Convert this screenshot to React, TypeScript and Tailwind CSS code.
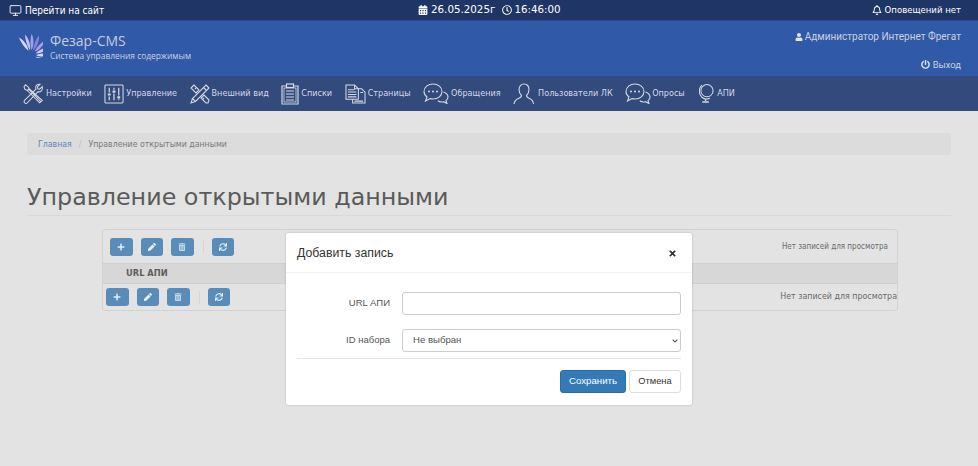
import {
  FaCalendarAlt,
  FaPen,
  FaPlus,
  FaPowerOff,
  FaRegBell,
  FaRegClock,
  FaSync,
  FaTimes,
  FaTrashAlt,
  FaUser,
  FaChevronDown,
} from "react-icons/fa";
import { Monitor } from "lucide-react";

const IconTools = () => (
  <svg width="21" height="22" viewBox="0 0 24 24" fill="none" stroke="currentColor" strokeWidth="1.2">
    <path d="M3 1.500l3.500 3v2L5 8 2 6.500l-.8-3zM6.500 6.500l14 14.500M5 8l14 14 3-2.500L7 6" />
    <path d="M22 3.500l-3 3-2-.5-.5-2 3-3c-2.500-.7-5 1-5 3.500 0 .8.200 1.300.4 1.800L2 19c-1.200 1.200-.8 2.500 0 3.200.8.700 2 1 3-.2L17.200 9.300c2.800 1 5.800-1.500 4.800-5.800z" />
  </svg>
);

const IconSliders = () => (
  <svg width="20" height="20" viewBox="0 0 21 21" fill="none" stroke="currentColor" strokeWidth="1.1">
    <rect x="1" y="1" width="19" height="19" rx="1" />
    <path d="M5.500 4v5M5.500 13v4M10.500 4v2M10.500 10v7M15.500 4v8M15.500 16v1" strokeWidth="1.300" />
    <path d="M4 11h3M9 8h3M14 14h3" strokeWidth="2.200" />
  </svg>
);

const IconDraw = () => (
  <svg width="20" height="20" viewBox="0 0 20 20" fill="none" stroke="currentColor" strokeWidth="1.1">
    <path d="M16 1l3 3L5.500 17.500 1 19l1.500-4.500z" />
    <path d="M13.500 3.500l3 3M2.500 14.500l3 3" />
    <path d="M4 1L1 4l5 5 3-3zM11 14l3-3 5 5-1 3-2 0zM5 5l1-1M13 15l1-1" />
  </svg>
);

const IconList = () => (
  <svg width="18" height="22" viewBox="0 0 18 22" fill="none" stroke="currentColor" strokeWidth="1.200">
    <path d="M5.500 3H1v18h16V3h-4.500" />
    <rect x="3" y="5" width="12" height="14" strokeWidth="0.800" />
    <rect x="5.500" y="1" width="7" height="3.500" />
    <path d="M5 8h8M5 11h8M5 14h8M5 17h8" />
  </svg>
);

const IconPages = () => (
  <svg width="21" height="20" viewBox="0 0 22 21" fill="none" stroke="currentColor" strokeWidth="1.100">
    <path d="M1 1h9l4 4v11H1z" />
    <path d="M10 1v4h4M3 6h7M3 8.500h9M3 11h9M3 13.500h9" />
    <path d="M14 5h3.500l3.500 3.500V20H8v-4" />
    <path d="M16 9h3M10 18h9" />
  </svg>
);

const IconChat = () => (
  <svg width="26" height="21" viewBox="0 0 26 21" fill="none" stroke="currentColor" strokeWidth="1.100">
    <path d="M10 1c5 0 9 3 9 7.500S15 16 10 16c-1 0-2-.1-3-.4L2.500 18 4 14C2 12.600 1 10.800 1 8.500 1 4 5 1 10 1z" />
    <path d="M20.500 9c2.700 1 4.500 2.800 4.500 5 0 1.500-.8 2.700-2 3.600l1 2.900-3.500-1.800c-2 .5-4.200.1-5.700-1" />
    <circle cx="6" cy="8.500" r="1" fill="currentColor" stroke="none" />
    <circle cx="10" cy="8.500" r="1" fill="currentColor" stroke="none" />
    <circle cx="14" cy="8.500" r="1" fill="currentColor" stroke="none" />
  </svg>
);

const IconPerson = () => (
  <svg width="22" height="22" viewBox="0 0 22 22" fill="none" stroke="currentColor" strokeWidth="1.100">
    <path d="M11 1c3 0 5 2.300 5 5.500 0 2.500-1 4.500-2.500 6 0 1.500 1 2.200 3 3 2 .8 3.600 1.800 4 5.500M11 1C8 1 6 3.300 6 6.500c0 2.500 1 4.500 2.500 6 0 1.500-1 2.200-3 3-2 .8-4 1.800-4.500 5.500" />
  </svg>
);

const IconGlobe = () => (
  <svg width="15" height="21" viewBox="0 0 16 21" fill="none" stroke="currentColor" strokeWidth="1.100">
    <circle cx="8.500" cy="7.500" r="6.500" />
    <path d="M3 1.500C-.5 5-.5 11 3 14.500c2.500 2 6 2.300 8.500 1" />
    <path d="M7 16.500v2M3.500 19.500h7" strokeWidth="1.500" />
  </svg>
);

const petals = [
  { angle: -32, fill: "#d9d6f2" },
  { angle: -14, fill: "#c6bff0" },
  { angle: 4, fill: "#a79ce6" },
  { angle: 24, fill: "#8d80dc" },
  { angle: 46, fill: "#a8a0e4" },
  { angle: 68, fill: "#c8c8ee" },
  { angle: 90, fill: "#d8dcf0" },
  { angle: 112, fill: "#aebde2" },
];

const Logo = () => (
  <svg width="25" height="25" viewBox="0 0 25 25">
    {petals.map((p) => (
      <path
        key={p.angle}
        d="M0 -5C-1.800 -10 -1.800 -16 -1 -21C.4 -20 1.800 -15 1.500 -10C1.300 -8 .7 -6 0 -5z"
        fill={p.fill}
        transform={`translate(13 22) rotate(${p.angle})`}
      />
    ))}
  </svg>
);

const navItems = [
  { icon: <IconTools />, label: "Настройки", gap: "ml-[2px]", extra: "" },
  { icon: <IconSliders />, label: "Управление", gap: "ml-[2px]", extra: "" },
  { icon: <IconDraw />, label: "Внешний вид", gap: "ml-[2px]", extra: "" },
  { icon: <IconList />, label: "Списки", gap: "ml-[2px]", extra: "" },
  { icon: <IconPages />, label: "Страницы", gap: "ml-[2px]", extra: "" },
  { icon: <IconChat />, label: "Обращения", gap: "ml-[2px]", extra: "" },
  { icon: <IconPerson />, label: "Пользователи ЛК", gap: "ml-[3px]", extra: "" },
  { icon: <IconChat />, label: "Опросы", gap: "ml-[1px]", extra: "" },
  { icon: <IconGlobe />, label: "АПИ", gap: "ml-[3px]", extra: "ml-[2px]" },
];

const toolBtn = "flex h-[18px] w-[22.500px] items-center justify-center rounded-[3px] bg-[#5a8cba] text-[8px] text-[#e8eef4]";

const Toolbar = () => (
  <div className="flex items-center">
    <button className={toolBtn}>
      <FaPlus />
    </button>
    <button className={`ml-[8px] ${toolBtn}`}>
      <FaPen />
    </button>
    <button className={`ml-[8px] ${toolBtn} !text-[#c5d6e6]`}>
      <FaTrashAlt />
    </button>
    <div className="ml-[9px] h-[13px] w-px bg-[#d6d6d6]" />
    <button className={`ml-[8px] ${toolBtn}`}>
      <FaSync />
    </button>
  </div>
);

export default function App() {
  return (
    <div className="relative h-[466px] w-[978px] overflow-hidden bg-[#e3e3e3] font-['DejaVu_Sans',sans-serif]">
      <div className="relative flex h-5 items-center justify-between bg-[#1f3566] pl-[9px] pr-[17px] text-white">
        <div className="flex items-center gap-[3px] font-['DejaVu_Sans_Condensed','DejaVu_Sans',sans-serif] text-[10px]">
          <Monitor size={13} strokeWidth={1.6} />
          <span>Перейти на сайт</span>
        </div>
        <div className="absolute left-[418px] flex items-center text-[10.300px]">
          <FaCalendarAlt className="text-[10px]" />
          <span className="ml-[3px]">26.05.2025г</span>
          <FaRegClock className="ml-[7px] text-[10px]" />
          <span className="ml-[2px]">16:46:00</span>
        </div>
        <div className="flex items-center gap-[3px] font-['DejaVu_Sans_Condensed','DejaVu_Sans',sans-serif] text-[9.500px]">
          <FaRegBell className="text-[10px]" />
          <span>Оповещений нет</span>
        </div>
      </div>

      <div className="flex h-[56px] justify-between border-t border-[#2b4a8c] bg-[#3059a8] pl-[18px] pr-[17px] font-['Open_Sans',sans-serif] text-[#c9d1e0]">
        <div className="flex pt-[12px]">
          <Logo />
          <div className="ml-[7px] -mt-px">
            <div className="text-[14px] leading-[18px] text-[#c3cde0]">Фезар-CMS</div>
            <div className="text-[8.400px] leading-[11px]">Система управления содержимым</div>
          </div>
        </div>
        <div className="flex flex-col items-end pt-[9px] font-['Roboto',sans-serif] text-[10px] leading-[13px]">
          <div className="flex items-center gap-[2px]">
            <FaUser className="text-[8px] text-[#e3e6ee]" />
            <span>Администратор Интернет Фрегат</span>
          </div>
          <div className="mt-[15px] flex items-center gap-[3px] text-[9.400px]">
            <FaPowerOff className="text-[9px] text-[#e3e6ee]" />
            <span>Выход</span>
          </div>
        </div>
      </div>

      <nav className="flex h-[35px] items-center gap-[12.500px] bg-[#324a7c] pl-[23px] font-['DejaVu_Sans_Condensed','DejaVu_Sans',sans-serif] text-[9px] text-[#d5d9e2]">
        {navItems.map((item, i) => (
          <div key={i} className={`flex items-center ${item.extra}`}>
            {item.icon}
            <span className={item.gap}>{item.label}</span>
          </div>
        ))}
      </nav>

      <div className="px-[27px]">
        <div className="mt-[22px] flex h-[22px] items-center rounded-[3px] bg-[#dcdcdc] px-[11px] pt-px font-['DejaVu_Sans_Condensed','DejaVu_Sans',sans-serif] text-[8.700px]">
          <span className="text-[#5b88b4]">Главная</span>
          <span className="mx-[7px] text-[#bdbdbd]">/</span>
          <span className="text-[#7a7a7a]">Управление открытыми данными</span>
        </div>

        <h1 className="mt-[26px] border-b border-[#d9d9d9] pb-px text-[23.800px] leading-[33px] text-[#5a5a5a]">
          Управление открытыми данными
        </h1>

        <div className="ml-[75px] mt-[13px] w-[796px] overflow-hidden rounded-[3px] border border-[#d2d2d2]">
          <div className="flex h-[33px] items-center justify-between pl-[7px] pr-[9px]">
            <Toolbar />
            <span className="font-['DejaVu_Sans_Condensed','DejaVu_Sans',sans-serif] text-[8px] text-[#6a6a6a]">
              Нет записей для просмотра
            </span>
          </div>
          <div className="flex h-[21px] items-center border-y border-[#d0d0d0] bg-[#d7d7d7] pl-[23px] text-[8.300px] font-bold text-[#5e5e5e]">
            URL АПИ
          </div>
          <div className="flex h-[26px] items-center justify-between pl-[3px]">
            <Toolbar />
            <span className="font-['DejaVu_Sans_Condensed','DejaVu_Sans',sans-serif] text-[8.800px] text-[#6a6a6a]">
              Нет записей для просмотра
            </span>
          </div>
        </div>
      </div>

      <div className="absolute left-[286px] top-[233px] h-[172px] w-[406px] rounded-[2px] bg-white font-['Liberation_Sans',sans-serif] shadow-[0_0_2px_rgba(0,0,0,0.25)]">
        <div className="flex h-[40px] items-center justify-between border-b border-[#f2f2f2] pl-[11px] pr-[15px] pt-px">
          <span className="text-[12.300px] text-[#333]">Добавить запись</span>
          <FaTimes className="text-[9px] text-[#333]" />
        </div>
        <div className="mx-[11px] border-b border-[#e5e5e5] pb-[6px] pt-[19px]">
          <div className="flex items-center">
            <label className="w-[93px] text-right text-[9.500px] text-[#555]">URL АПИ</label>
            <input className="ml-[12px] h-[23px] w-[279px] rounded-[3px] border border-[#ccc] bg-white" />
          </div>
          <div className="relative mt-[14px] flex items-center">
            <label className="w-[93px] text-right text-[9.500px] text-[#555]">ID набора</label>
            <select className="ml-[12px] h-[23px] w-[279px] appearance-none rounded-[3px] border border-[#ccc] bg-white pl-[10px] text-[9.600px] text-[#555]">
              <option>Не выбран</option>
            </select>
            <FaChevronDown className="absolute right-[3px] top-[9px] text-[6px] text-[#444]" />
          </div>
        </div>
        <div className="mr-[11px] mt-[11px] flex justify-end gap-[3px]">
          <button className="h-[23px] w-[66px] rounded-[3px] border border-[#2e6da4] bg-[#337ab7] text-[9.700px] text-white">
            Сохранить
          </button>
          <button className="h-[23px] w-[52px] rounded-[3px] border border-[#ddd] bg-white text-[9.300px] text-[#333]">
            Отмена
          </button>
        </div>
      </div>
    </div>
  );
}
